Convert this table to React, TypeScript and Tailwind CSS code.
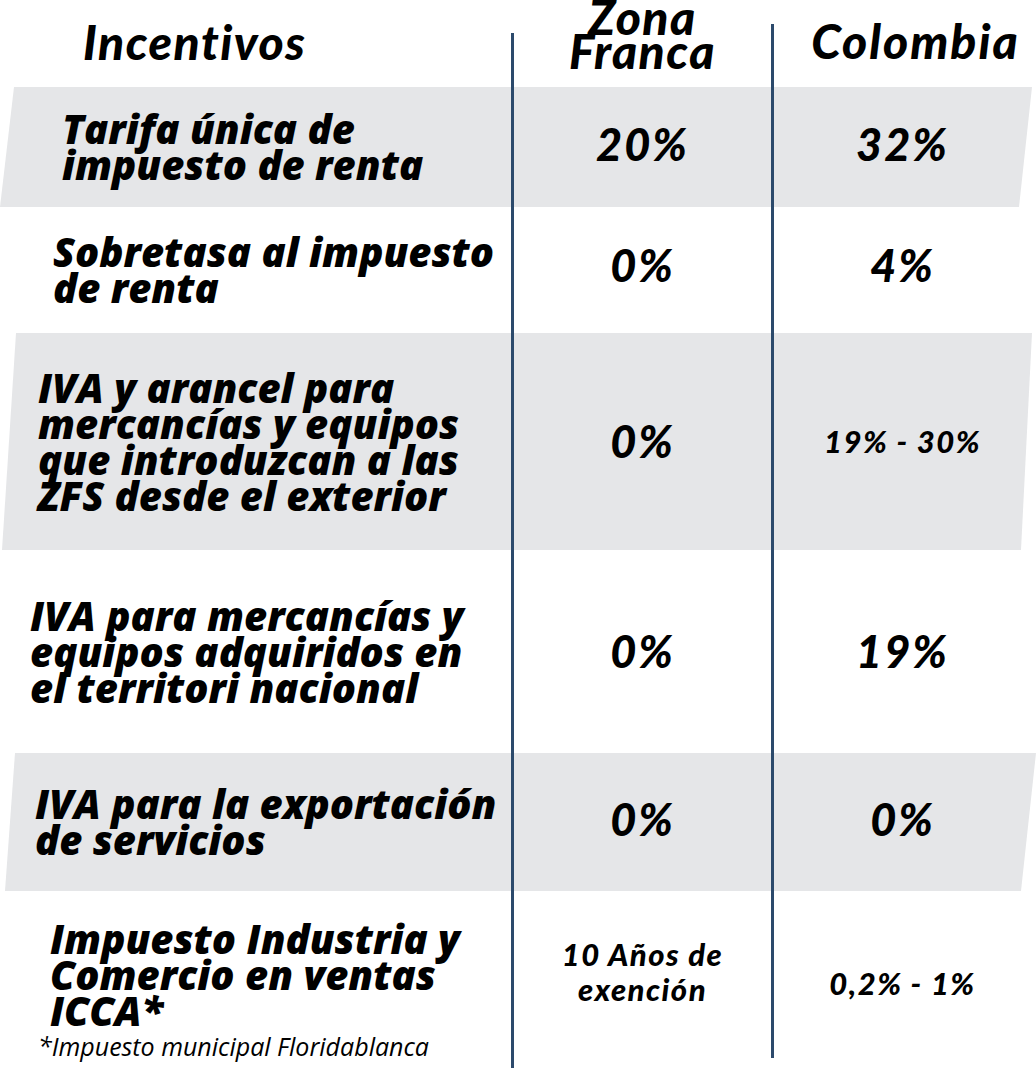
const label = "font-['Open_Sans',_sans-serif] font-extrabold italic text-[40px] leading-[36px] text-black";
const big = "font-['Lato',_sans-serif] font-black italic text-[45px] leading-none tracking-[2px] text-black text-center";
const small = "font-['Lato',_sans-serif] font-black italic text-[31px] leading-[35px] tracking-[1.5px] text-black text-center";
const head = "font-['Lato',_sans-serif] font-black italic text-[48px] leading-[34px] tracking-[1.5px] text-black";

type Row = {
  lines: string[];
  zf: string;
  co: string;
  h: string;
  pl: string;
  vb?: string;
  grey?: string;
  coClass?: string;
};

const rows: Row[] = [
  {
    lines: ["Tarifa única de", "impuesto de renta"],
    zf: "20%",
    co: "32%",
    h: "h-[120px]",
    pl: "pl-[62px]",
    vb: "pb-[5px]",
    grey: "before:left-0 before:right-[4px] before:[clip-path:polygon(14px_0,100%_0,calc(100%_-_13px)_100%,0_100%)]",
  },
  {
    lines: ["Sobretasa al impuesto", "de renta"],
    zf: "0%",
    co: "4%",
    h: "h-[126px]",
    pl: "pl-[53px]",
    vb: "pb-[10px]",
  },
  {
    lines: ["IVA y arancel para", "mercancías y equipos", "que introduzcan a las", "ZFS desde el exterior"],
    zf: "0%",
    co: "19% - 30%",
    h: "h-[217px]",
    pl: "pl-[38px]",
    coClass: small,
    grey: "before:left-[2px] before:right-[4px] before:[clip-path:polygon(14px_0,100%_0,calc(100%_-_11px)_100%,0_100%)]",
  },
  {
    lines: ["IVA para mercancías y", "equipos adquiridos en", "el territori nacional"],
    zf: "0%",
    co: "19%",
    h: "h-[203px]",
    pl: "pl-[30px]",
  },
  {
    lines: ["IVA para la exportación", "de servicios"],
    zf: "0%",
    co: "0%",
    h: "h-[138px]",
    pl: "pl-[35px]",
    vb: "pb-[6px]",
    grey: "before:left-[5px] before:right-0 before:[clip-path:polygon(10px_0,100%_0,calc(100%_-_15px)_100%,0_100%)]",
  },
];

export default function App() {
  return (
    <div className="relative w-[1036px] h-[1070px] overflow-hidden bg-white">
      {/* header */}
      <div className="grid grid-cols-[512px_261px_1fr] h-[87px]">
        <div className={`${head} pl-[83px] pt-[25px]`}>Incentivos</div>
        <div className={`${head} text-center`}>
          Zona
          <br />
          Franca
        </div>
        <div className={`${head} pl-[22px] pt-[24px] text-center tracking-[2px]`}>Colombia</div>
      </div>

      {rows.map((r, i) => (
        <div
          key={i}
          className={`relative isolate grid grid-cols-[512px_261px_1fr] items-center ${r.h} ${
            r.grey ? "before:absolute before:inset-y-0 before:-z-10 before:bg-[#e5e6e8] " + r.grey : ""
          }`}
        >
          <div className={`${label} ${r.pl}`}>
            {r.lines.map((l) => (
              <div key={l}>{l}</div>
            ))}
          </div>
          <div className={`${big} ${r.vb ?? ""}`}>{r.zf}</div>
          <div className={`${r.coClass ?? big} ${r.vb ?? ""} pr-[4px]`}>{r.co}</div>
        </div>
      ))}

      {/* last row */}
      <div className="grid grid-cols-[512px_261px_1fr] h-[179px]">
        <div className="pt-[30px]">
          <div className={`${label} pl-[50px]`}>
            <div>Impuesto Industria y</div>
            <div>Comercio en ventas</div>
            <div>ICCA*</div>
          </div>
          <div className="pl-[38px] mt-[2px] font-['Open_Sans',_sans-serif] italic text-[25px] leading-[30px] text-black">
            *Impuesto municipal Floridablanca
          </div>
        </div>
        <div className={`${small} pt-[46px]`}>
          10 Años de
          <br />
          exención
        </div>
        <div className={`${small} pt-[75px] pr-[4px]`}>0,2% - 1%</div>
      </div>

      {/* column dividers */}
      <div className="absolute left-[511px] top-[33px] h-[1035px] w-[3px] bg-[#2c4a6c]" />
      <div className="absolute left-[771px] top-[24px] h-[1034px] w-[3px] bg-[#2c4a6c]" />
    </div>
  );
}
